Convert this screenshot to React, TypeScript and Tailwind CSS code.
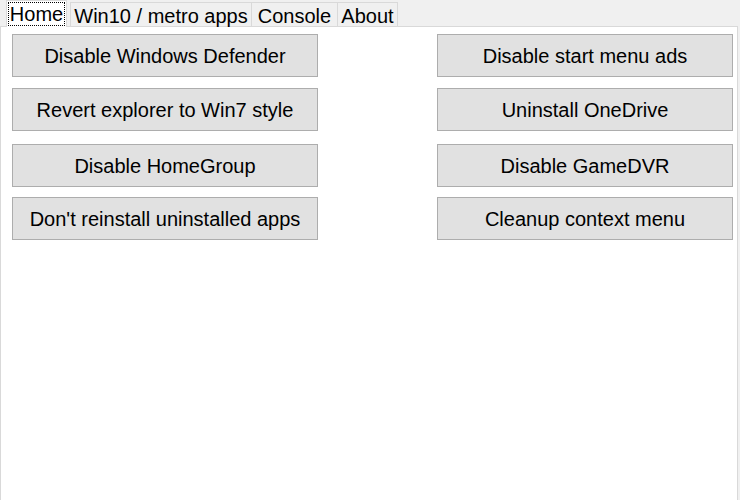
const leftButtons = [
  "Disable Windows Defender",
  "Revert explorer to Win7 style",
  "Disable HomeGroup",
  "Don't reinstall uninstalled apps",
];

const rightButtons = [
  "Disable start menu ads",
  "Uninstall OneDrive",
  "Disable GameDVR",
  "Cleanup context menu",
];

// spacing above each row, measured off the screenshot
const rowMargins = ["mt-[7px]", "mt-[11px]", "mt-[13px]", "mt-[10px]"];

const tabs = [
  { text: "Win10 / metro apps", w: "w-[182px] ml-[3px] border-l" },
  { text: "Console", w: "w-[86px]" },
  { text: "About", w: "w-[60px]" },
];

const App = () => {
  return (
    <div
      className="flex h-[500px] w-[740px] flex-col overflow-hidden bg-[#f0f0f0] text-black"
      style={{ fontFamily: '"Liberation Sans", Arial, sans-serif' }}
    >
      <div className="relative z-10 flex h-[26px] items-end pl-[6px]">
        <div className="-mb-px flex h-[27px] w-[61px] items-start border-x border-t border-[#d9d9d9] bg-white px-px pt-px">
          <div className="flex h-[24px] w-full items-center justify-center border border-dotted border-black text-[20px] leading-none">
            Home
          </div>
        </div>
        {tabs.map((t) => (
          <div
            key={t.text}
            className={`flex h-[24px] items-center justify-center border-r border-t border-[#d9d9d9] bg-[#f0f0f0] pt-[2px] text-[20px] leading-none ${t.w}`}
          >
            {t.text}
          </div>
        ))}
      </div>

      <div className="flex w-[738px] grow flex-col border-x border-t border-[#d9d9d9] bg-white">
        {leftButtons.map((label, i) => (
          <div key={label} className={`flex ${rowMargins[i]}`}>
            <Button label={label} className="ml-[11px] w-[306px]" />
            <Button label={rightButtons[i]} className="ml-[119px] w-[296px]" />
          </div>
        ))}
      </div>
    </div>
  );
};

const Button = ({ label, className }: { label: string; className: string }) => {
  return (
    <button
      className={`flex h-[43px] items-center justify-center border border-[#adadad] bg-[#e1e1e1] text-[20px] leading-none text-black ${className}`}
    >
      {label}
    </button>
  );
};

export default App;
